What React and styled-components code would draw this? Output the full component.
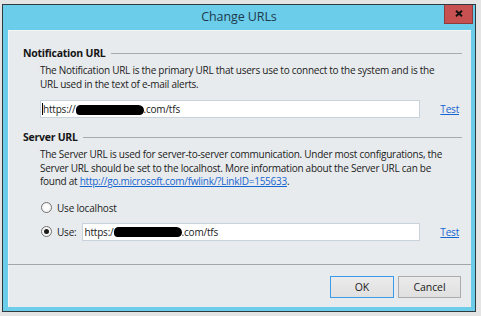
import React from "react";
import styled, { createGlobalStyle } from "styled-components";

const GlobalStyle = createGlobalStyle`
  html, body {
    margin: 0;
    padding: 0;
    width: 481px;
    height: 316px;
    overflow: hidden;
    background: #e4e4e4;
    font-family: "Open Sans", "Noto Sans", sans-serif;
  }
  * { box-sizing: border-box; }
`;

const Page = styled.div`
  padding: 4px 0 0 2px;
`;

const Window = styled.div`
  width: 474px;
  height: 308px;
  border: 1px solid #2f3a40;
  background: #6bcdea;
  display: flex;
  flex-direction: column;
`;

const TitleBar = styled.div`
  height: 25px;
  display: grid;
  grid-template-columns: 1fr auto 1fr;
  align-items: start;
`;

const Title = styled.div`
  grid-column: 2;
  font-size: 12.5px;
  line-height: 24px;
  color: #1d3a4c;
  letter-spacing: -0.1px;
`;

const CloseButton = styled.div`
  grid-column: 3;
  justify-self: end;
  margin-right: 2px;
  width: 29px;
  height: 19px;
  background: #c75050;
  border: 1px solid #8e3b3b;
  border-top: none;
  display: flex;
  align-items: center;
  justify-content: center;
  padding-bottom: 1px;
`;

const Client = styled.div`
  flex: 1;
  margin: 0 4px 4px 5px;
  background: #e8ebee;
  box-shadow: inset 1px 1px 0 #f3f5f7;
  display: flex;
  flex-direction: column;
`;

const Body = styled.div`
  flex: 1;
  padding: 16px 9px 0 15px;
`;

const Heading = styled.div`
  display: flex;
  align-items: center;
  gap: 5px;
  height: 14px;
  margin-top: ${(p) => p.$top || 0}px;
  font-size: 10.5px;
  font-weight: 700;
  color: #151515;
  letter-spacing: -0.25px;
  &::after {
    content: "";
    flex: 1;
    height: 1px;
    background: #a8abae;
    margin-top: 1px;
  }
`;

const Desc = styled.div`
  margin: 4px 0 0 17px;
  font-size: 10px;
  line-height: 13.5px;
  color: #1b1b1b;
  letter-spacing: -0.26px;
  white-space: nowrap;
`;

const Link = styled.span`
  color: #1565d0;
  text-decoration: underline;
`;

const FieldRow = styled.div`
  display: flex;
  align-items: center;
  margin: ${(p) => p.$top || 0}px 3px 0 17px;
  height: 18px;
`;

const TextBox = styled.div`
  flex: 1;
  height: 18px;
  background: #ffffff;
  border: 1px solid #c9d3dd;
  display: flex;
  align-items: center;
  padding-left: ${(p) => p.$pad || 1}px;
  font-size: 10px;
  color: #1b1b1b;
  letter-spacing: -0.2px;
  white-space: nowrap;
  overflow: hidden;
`;

const Caret = styled.span`
  display: inline-block;
  width: 1px;
  height: 12px;
  background: #000;
`;

const Redacted = styled.span`
  display: inline-block;
  width: ${(p) => p.$w}px;
  height: 10px;
  margin-top: 1px;
  background: #000;
  border-radius: 5px 6px 5px 4px;
`;

const TestLink = styled.span`
  margin-left: 20px;
  font-size: 10px;
  color: #1565d0;
  text-decoration: underline;
  letter-spacing: -0.2px;
`;

const RadioRow = styled.div`
  display: flex;
  align-items: center;
  height: 14px;
  margin: ${(p) => p.$top || 0}px 0 0 18px;
  font-size: 10px;
  color: #1b1b1b;
  letter-spacing: -0.2px;
`;

const Radio = styled.span`
  width: 11px;
  height: 11px;
  border-radius: 50%;
  border: 1px solid #707070;
  background: radial-gradient(circle, #ffffff 0%, #f0f0f0 100%);
  display: flex;
  align-items: center;
  justify-content: center;
  margin-right: 5px;
  flex: none;
  &::after {
    content: "";
    display: ${(p) => (p.$checked ? "block" : "none")};
    width: 5px;
    height: 5px;
    border-radius: 50%;
    background: #1a1a1a;
  }
`;

const UseRow = styled.div`
  display: flex;
  align-items: center;
  height: 18px;
  margin: 8px 3px 0 18px;
  font-size: 10px;
  color: #1b1b1b;
  letter-spacing: -0.2px;
`;

const UseLabel = styled.span`
  margin-right: 5px;
`;

const Footer = styled.div`
  border-top: 1px solid #a3a6a9;
  height: 43px;
  display: flex;
  justify-content: flex-end;
  align-items: flex-start;
  gap: 4px;
  padding: 11px 10px 0 0;
`;

const Button = styled.div`
  width: ${(p) => p.$w}px;
  height: 22px;
  border: 1px solid ${(p) => (p.$default ? "#3c9be8" : "#acacac")};
  background: linear-gradient(#ebebeb, #e0e0e0);
  display: flex;
  align-items: center;
  justify-content: center;
  font-size: 10.5px;
  color: #1b1b1b;
  letter-spacing: -0.1px;
`;

export default function App() {
  return (
    <>
      <GlobalStyle />
      <Page>
        <Window>
          <TitleBar>
            <Title>Change URLs</Title>
            <CloseButton>
              <svg width="8" height="7" viewBox="0 0 8 7">
                <path d="M1 0.8 L7 6.2 M7 0.8 L1 6.2" stroke="#111" strokeWidth="2" />
              </svg>
            </CloseButton>
          </TitleBar>
          <Client>
            <Body>
              <Heading>Notification URL</Heading>
              <Desc>
                The Notification URL is the primary URL that users use to connect to the system and is the
                <br />
                URL used in the text of e-mail alerts.
              </Desc>
              <FieldRow $top={9}>
                <TextBox $pad={1}>
                  <Caret />
                  https://
                  <Redacted $w={68} />
                  .com/tfs
                </TextBox>
                <TestLink>Test</TestLink>
              </FieldRow>
              <Heading $top={12}>Server URL</Heading>
              <Desc>
                The Server URL is used for server-to-server communication. Under most configurations, the
                <br />
                Server URL should be set to the localhost. More information about the Server URL can be
                <br />
                found at <Link>http://go.microsoft.com/fwlink/?LinkID=155633</Link>.
              </Desc>
              <RadioRow $top={12}>
                <Radio />
                Use localhost
              </RadioRow>
              <UseRow>
                <Radio $checked />
                <UseLabel>Use:</UseLabel>
                <TextBox $pad={2}>
                  https:/
                  <Redacted $w={68} />
                  .com/tfs
                </TextBox>
                <TestLink>Test</TestLink>
              </UseRow>
            </Body>
            <Footer>
              <Button $w={64} $default>OK</Button>
              <Button $w={63}>Cancel</Button>
            </Footer>
          </Client>
        </Window>
      </Page>
    </>
  );
}
